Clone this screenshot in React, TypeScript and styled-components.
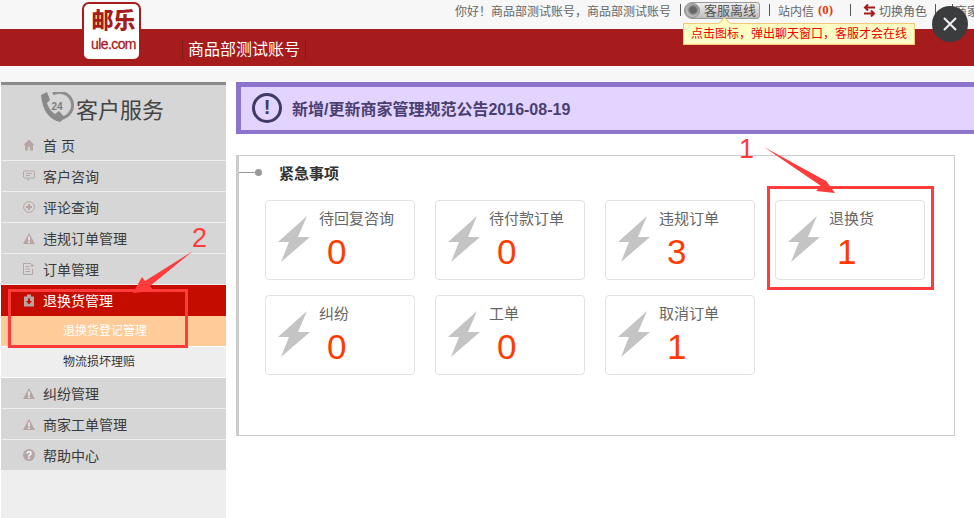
// App.tsx
import React from 'react';
import styled, { createGlobalStyle } from 'styled-components';

const FONT = '"Liberation Sans", "Noto Sans CJK SC", sans-serif';

const GlobalStyle = createGlobalStyle`
  html, body {
    margin: 0;
    padding: 0;
    width: 974px;
    height: 518px;
    overflow: hidden;
    background: #fff;
    font-family: ${FONT};
  }
  * { box-sizing: border-box; }
`;

const Page = styled.div`
  position: relative;
  width: 974px;
  height: 518px;
  overflow: hidden;
  display: flex;
  flex-direction: column;
  background: #fff;
`;

// Header
const TopBar = styled.div`
  height: 29px;
  background: #f7f7f7;
  display: flex;
  align-items: center;
  padding: 0 0 9px 455px;
  font-size: 12px;
  color: #666;
  white-space: nowrap;
`;

const TopText = styled.span<{ $w: number }>`
  flex: none;
  width: ${(p) => p.$w}px;
  display: inline-flex;
  align-items: center;
  gap: 3px;
`;

const Divider = styled.span<{ $ml: number; $mr: number }>`
  flex: none;
  width: 1px;
  height: 12px;
  background: #555;
  margin: 0 ${(p) => p.$mr}px 0 ${(p) => p.$ml}px;
`;

const ServiceButton = styled.span`
  flex: none;
  width: 76px;
  height: 17px;
  margin-top: 1px;
  border: 1px solid #999;
  border-radius: 8px 3px 3px 8px;
  background: linear-gradient(#f0f0f0, #bdbdbd);
  display: flex;
  align-items: center;
  font-size: 13px;
  line-height: 15px;
  color: #555;
  gap: 4px;
`;

const ServiceDot = styled.span`
  width: 15px;
  height: 15px;
  border-radius: 50%;
  background: radial-gradient(circle at 55% 45%, #666 0 30%, #bbb 60%, #e5e5e5 100%);
  border: 1px solid #888;
  flex: none;
`;

const Count = styled.b`
  color: #e63a0c;
  font-family: "Liberation Serif", serif;
  font-size: 13px;
  margin-left: 1px;
`;

const SwapIcon = styled.svg`
  flex: none;
  margin-left: 2px;
`;

const RedBand = styled.div`
  height: 37px;
  background: #a61c1c;
  padding: 3px 0 0 182px;
  display: flex;
  align-items: center;
`;

const AccountName = styled.div`
  height: 19px;
  width: 124px;
  border-left: 1px solid #7d1a1a;
  border-right: 1px solid #7d1a1a;
  color: #fff;
  font-size: 16px;
  line-height: 19px;
  padding-left: 5px;
  white-space: nowrap;
`;

const Gutter = styled.div`
  height: 16px;
  background: #f7f7f7;
`;

const Logo = styled.div`
  position: absolute;
  left: 82px;
  top: 2px;
  width: 59px;
  height: 59px;
  padding-left: 4px;
  background: #fff;
  border: 2px solid #a61c1c;
  border-radius: 7px;
  display: flex;
  flex-direction: column;
  align-items: center;
  color: #a61c1c;
  line-height: 1;
`;

const LogoCn = styled.div`
  font-size: 22px;
  font-weight: 900;
  margin-top: 6px;
`;

const LogoEn = styled.div`
  font-size: 14px;
  margin-top: 5px;
  letter-spacing: -0.6px;
  -webkit-text-stroke: 0.3px #a61c1c;
`;

const Tooltip = styled.div`
  position: absolute;
  left: 683px;
  top: 23px;
  width: 232px;
  height: 22px;
  background: #ffffc4;
  border: 1px solid #f5c877;
  color: #f00000;
  font-size: 12px;
  line-height: 20px;
  text-align: center;
  white-space: nowrap;

  &::before {
    content: '';
    position: absolute;
    left: 36px;
    top: -5px;
    width: 8px;
    height: 8px;
    background: #ffffc4;
    border-left: 1px solid #f5c877;
    border-top: 1px solid #f5c877;
    transform: rotate(45deg);
  }
`;

const CloseButton = styled.div`
  position: absolute;
  left: 932px;
  top: 6px;
  width: 36px;
  height: 36px;
  border-radius: 50%;
  background: #3a3c3e;
  display: flex;
  align-items: center;
  justify-content: center;
`;

// Body
const Body = styled.div`
  flex: 1;
  display: flex;
  min-height: 0;
`;

const Sidebar = styled.aside`
  width: 225px;
  margin-left: 1px;
  flex: none;
  background: #eee;
  border-top: 3px solid #8a8a8a;
  display: flex;
  flex-direction: column;
`;

const SideHeader = styled.div`
  height: 45px;
  background: #d6d6d6;
  display: flex;
  align-items: center;
  padding-left: 39px;
  font-size: 22px;
  color: #444;
`;

const MenuList = styled.div`
  display: flex;
  flex-direction: column;
`;

const MenuItem = styled.div<{ $active?: boolean }>`
  height: 31px;
  display: flex;
  align-items: center;
  gap: 8px;
  padding-left: 22px;
  font-size: 14px;
  white-space: nowrap;
  background: ${(p) => (p.$active ? '#c40d00' : '#d6d6d6')};
  color: ${(p) => (p.$active ? '#fff' : '#3a3a3a')};
  border-bottom: 1px solid ${(p) => (p.$active ? '#c40d00' : '#eeeeee')};
`;

const SubItem = styled.div<{ $active?: boolean }>`
  height: 31px;
  padding-left: 62px;
  font-size: 12px;
  line-height: 30px;
  white-space: nowrap;
  background: ${(p) => (p.$active ? '#ffcc99' : '#eeeeee')};
  color: ${(p) => (p.$active ? '#fff' : '#333')};
  border-bottom: 1px solid #fff;
`;

const Main = styled.main`
  flex: 1;
  min-width: 0;
  padding-left: 10px;
  display: flex;
  flex-direction: column;
`;

const Notice = styled.div`
  height: 52px;
  background: #e2d4ff;
  border-top: 5px solid #8c73cc;
  border-left: 5px solid #8c73cc;
  border-bottom: 4px solid #8c73cc;
  display: flex;
  align-items: center;
  gap: 10px;
  padding: 0 0 2px 11px;
  font-size: 16px;
  font-weight: 700;
  color: #4a3f70;
`;

const NoticeIcon = styled.div`
  width: 30px;
  height: 30px;
  border: 3px solid #403a66;
  border-radius: 50%;
  flex: none;
  display: flex;
  align-items: center;
  justify-content: center;
  font-size: 20px;
  font-weight: 700;
  color: #403a66;
`;

const Section = styled.section`
  width: 719px;
  height: 281px;
  margin-top: 21px;
  border: 1px solid #ccc;
  border-left-width: 3px;
  display: flex;
  flex-direction: column;
`;

const SectionTitle = styled.div`
  height: 34px;
  padding-bottom: 1px;
  display: flex;
  align-items: center;
  font-size: 15px;
  font-weight: 700;
  color: #333;
`;

const TitleLine = styled.span`
  width: 16px;
  height: 1px;
  background: #999;
`;

const TitleDot = styled.span`
  width: 7px;
  height: 7px;
  border-radius: 50%;
  background: #999;
  margin-right: 17px;
`;

const CardGrid = styled.div`
  display: grid;
  grid-template-columns: repeat(4, 150px);
  grid-auto-rows: 80px;
  gap: 15px 20px;
  padding: 10px 0 0 26px;
`;

const Card = styled.div`
  border: 1px solid #e2e2e2;
  border-radius: 4px;
  display: flex;
  padding: 14px 0 0 12px;
`;

const CardBody = styled.div`
  margin-left: 8px;
  display: flex;
  flex-direction: column;
`;

const CardLabel = styled.div`
  font-size: 15px;
  line-height: 18px;
  margin-top: -5px;
  color: #666;
  white-space: nowrap;
`;

const CardValue = styled.div`
  font-size: 35px;
  line-height: 36px;
  margin: 6px 0 0 8px;
  color: #ff3c00;
`;

const BoltIcon = styled.svg`
  flex: none;
  margin-top: 1px;
`;

// Annotations drawn on top of the screenshot
const Overlay = styled.svg`
  position: absolute;
  left: 0;
  top: 0;
  pointer-events: none;
`;

const MarkBox = styled.div<{ $x: number; $y: number; $w: number; $h: number }>`
  position: absolute;
  left: ${(p) => p.$x}px;
  top: ${(p) => p.$y}px;
  width: ${(p) => p.$w}px;
  height: ${(p) => p.$h}px;
  border: 3px solid #ff3b3b;
`;

const MarkNumber = styled.div<{ $x: number; $y: number }>`
  position: absolute;
  left: ${(p) => p.$x}px;
  top: ${(p) => p.$y}px;
  font-size: 27px;
  line-height: 30px;
  color: #ff3b3b;
`;

const Bolt = () => (
  <BoltIcon width="33" height="47" viewBox="0 0 33 47">
    <path d="M29 0 L20 21 L32 21 L3 46 L11 26 L0 26 Z" fill="#c4c4c4" />
  </BoltIcon>
);

const HomeIcon = () => (
  <svg width="12" height="12" viewBox="0 0 11 12">
    <path d="M5.5 0.5 L11 6 L9.5 6 L9.5 11.5 L6.5 11.5 L6.5 8 L4.5 8 L4.5 11.5 L1.5 11.5 L1.5 6 L0 6 Z" fill="#b5a6a6" />
  </svg>
);

const ChatIcon = () => (
  <svg width="12" height="12" viewBox="0 0 12 12" fill="none" stroke="#b5a6a6">
    <path d="M1.5 1 H10.5 Q11.5 1 11.5 2 V7 Q11.5 8 10.5 8 H7 L5 10.5 V8 H1.5 Q0.5 8 0.5 7 V2 Q0.5 1 1.5 1 Z" />
    <path d="M3 3.5 H9 M3 5.5 H7" />
  </svg>
);

const PlusIcon = () => (
  <svg width="12" height="12" viewBox="0 0 12 12" fill="none">
    <circle cx="6" cy="6" r="5.4" stroke="#b5a6a6" />
    <path d="M6 3 V9 M3 6 H9" stroke="#b5a6a6" strokeWidth="2" />
  </svg>
);

const WarnIcon = () => (
  <svg width="12" height="11" viewBox="0 0 12 11">
    <path d="M6 0 L12 11 H0 Z" fill="#b5a6a6" />
    <path d="M6 3.5 V7.5 M6 8.5 V10" stroke="#fff" strokeWidth="1.4" />
  </svg>
);

const OrderIcon = () => (
  <svg width="12" height="12" viewBox="0 0 12 12" fill="none" stroke="#b5a6a6">
    <path d="M8 0.5 H0.5 V11.5 H9.5 V6" />
    <path d="M2.5 3.5 H6 M2.5 6 H7 M2.5 8.5 H7 M9 1 V4 M7.5 2.5 H11" />
  </svg>
);

const ReturnIcon = () => (
  <svg width="12" height="13" viewBox="0 0 12 13">
    <path d="M4 0.5 H8 V2.5 H11 V12.5 H1 V2.5 H4 Z" fill="#b5a6a6" />
    <path d="M5 4.5 H7 V7 H9 L6 10.5 L3 7 H5 Z" fill="#c40d00" />
  </svg>
);

const HelpIcon = () => (
  <svg width="12" height="12" viewBox="0 0 12 12">
    <circle cx="6" cy="6" r="6" fill="#b5a6a6" />
    <text x="6" y="9.5" fontSize="10" fontWeight="700" textAnchor="middle" fill="#fff" fontFamily="Liberation Sans">?</text>
  </svg>
);

const PhoneIcon = () => (
  <svg width="36" height="32" viewBox="0 0 36 32">
    <path d="M13 2 A13 13 0 1 1 22 26" fill="none" stroke="#8d8d8d" strokeWidth="3" />
    <path d="M1 3 L7 0 L10 8 L7 11 Q9 18 15 22 L19 19 L25 26 L20 30 Q3 26 1 3 Z" fill="#8a8a8a" />
    <text x="17" y="18" fontSize="10" fontWeight="700" textAnchor="middle" fill="#7d7d7d" fontFamily="Liberation Sans">24</text>
  </svg>
);

const menuBefore = [
  { label: '首 页', icon: <HomeIcon /> },
  { label: '客户咨询', icon: <ChatIcon /> },
  { label: '评论查询', icon: <PlusIcon /> },
  { label: '违规订单管理', icon: <WarnIcon /> },
  { label: '订单管理', icon: <OrderIcon /> },
];

const menuAfter = [
  { label: '纠纷管理', icon: <WarnIcon /> },
  { label: '商家工单管理', icon: <WarnIcon /> },
  { label: '帮助中心', icon: <HelpIcon /> },
];

const cards = [
  { label: '待回复咨询', value: 0 },
  { label: '待付款订单', value: 0 },
  { label: '违规订单', value: 3 },
  { label: '退换货', value: 1 },
  { label: '纠纷', value: 0 },
  { label: '工单', value: 0 },
  { label: '取消订单', value: 1 },
];

const App: React.FC = () => {
  return (
    <Page>
      <GlobalStyle />
      <TopBar>
        <TopText $w={225}>你好！商品部测试账号，商品部测试账号</TopText>
        <Divider $ml={0} $mr={3} />
        <ServiceButton>
          <ServiceDot />
          客服离线
        </ServiceButton>
        <Divider $ml={9} $mr={8} />
        <TopText $w={62}>
          站内信<Count>(0)</Count>
        </TopText>
        <Divider $ml={10} $mr={10} />
        <TopText $w={74}>
          <SwapIcon width="13" height="13" viewBox="0 0 13 13" fill="none" stroke="#a61c1c" strokeWidth="2">
            <path d="M12 3.5 H3 M5 0.5 L2 3.5 L5 6.5 M1 9.5 H10 M8 6.5 L11 9.5 L8 12.5" />
          </SwapIcon>
          切换角色
        </TopText>
        <Divider $ml={0} $mr={16} />
        <Divider $ml={0} $mr={2} />
        <TopText $w={19}>商家</TopText>
      </TopBar>
      <RedBand>
        <AccountName>商品部测试账号</AccountName>
      </RedBand>
      <Gutter />
      <Body>
        <Sidebar>
          <SideHeader>
            <PhoneIcon />
            客户服务
          </SideHeader>
          <MenuList>
            {menuBefore.map((item) => (
              <MenuItem key={item.label}>
                {item.icon}
                {item.label}
              </MenuItem>
            ))}
            <MenuItem $active>
              <ReturnIcon />
              退换货管理
            </MenuItem>
            <SubItem $active>退换货登记管理</SubItem>
            <SubItem>物流损坏理赔</SubItem>
            {menuAfter.map((item) => (
              <MenuItem key={item.label}>
                {item.icon}
                {item.label}
              </MenuItem>
            ))}
          </MenuList>
        </Sidebar>
        <Main>
          <Notice>
            <NoticeIcon>!</NoticeIcon>
            新增/更新商家管理规范公告2016-08-19
          </Notice>
          <Section>
            <SectionTitle>
              <TitleLine />
              <TitleDot />
              紧急事项
            </SectionTitle>
            <CardGrid>
              {cards.map((card) => (
                <Card key={card.label}>
                  <Bolt />
                  <CardBody>
                    <CardLabel>{card.label}</CardLabel>
                    <CardValue>{card.value}</CardValue>
                  </CardBody>
                </Card>
              ))}
            </CardGrid>
          </Section>
        </Main>
      </Body>

      <Logo>
        <LogoCn>邮乐</LogoCn>
        <LogoEn>ule.com</LogoEn>
      </Logo>
      <Tooltip>点击图标，弹出聊天窗口，客服才会在线</Tooltip>
      <CloseButton>
        <svg width="16" height="16" viewBox="0 0 16 16" stroke="#f2f2f2" strokeWidth="2">
          <path d="M2 2 L14 14 M14 2 L2 14" />
        </svg>
      </CloseButton>

      <MarkBox $x={767} $y={186} $w={167} $h={104} />
      <MarkBox $x={8} $y={289} $w={180} $h={59} />
      <MarkNumber $x={739} $y={134}>1</MarkNumber>
      <MarkNumber $x={192} $y={223}>2</MarkNumber>
      <Overlay width="974" height="518" viewBox="0 0 974 518">
        <path d="M764 147 L826 181 L824 178 L835 193 L816 191 L821 186 Z" fill="#ff3b3b" />
        <path d="M193 251 L150 286 L154 291 L133 293 L142 277 L145 281 Z" fill="#ff3b3b" />
      </Overlay>
    </Page>
  );
};

export default App;
